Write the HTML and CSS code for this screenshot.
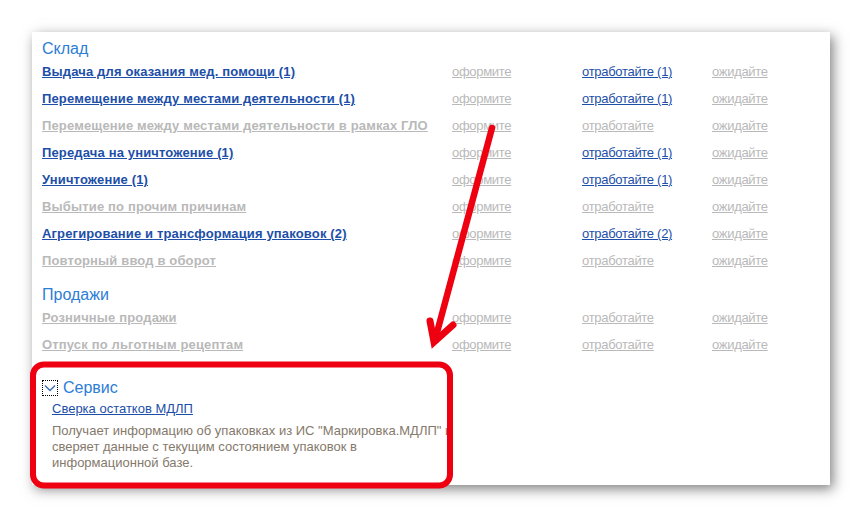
FILE: index.html
```html
<!DOCTYPE html>
<html lang="ru">
<head>
<meta charset="utf-8">
<title>Маркировка</title>
<link rel="stylesheet" href="styles.css">
</head>
<body>
<div class="page">
  <div class="panel">
    <div class="group-title">Склад</div>
    <div class="rows">
      <a class="cell name on">Выдача для оказания мед. помощи (1)</a>
      <a class="cell off">оформите</a>
      <a class="cell on-r">отработайте (1)</a>
      <a class="cell off">ожидайте</a>

      <a class="cell name on">Перемещение между местами деятельности (1)</a>
      <a class="cell off">оформите</a>
      <a class="cell on-r">отработайте (1)</a>
      <a class="cell off">ожидайте</a>

      <a class="cell name off">Перемещение между местами деятельности в рамках ГЛО</a>
      <a class="cell off">оформите</a>
      <a class="cell off">отработайте</a>
      <a class="cell off">ожидайте</a>

      <a class="cell name on">Передача на уничтожение (1)</a>
      <a class="cell off">оформите</a>
      <a class="cell on-r">отработайте (1)</a>
      <a class="cell off">ожидайте</a>

      <a class="cell name on">Уничтожение (1)</a>
      <a class="cell off">оформите</a>
      <a class="cell on-r">отработайте (1)</a>
      <a class="cell off">ожидайте</a>

      <a class="cell name off">Выбытие по прочим причинам</a>
      <a class="cell off">оформите</a>
      <a class="cell off">отработайте</a>
      <a class="cell off">ожидайте</a>

      <a class="cell name on">Агрегирование и трансформация упаковок (2)</a>
      <a class="cell off">оформите</a>
      <a class="cell on-r">отработайте (2)</a>
      <a class="cell off">ожидайте</a>

      <a class="cell name off">Повторный ввод в оборот</a>
      <a class="cell off">оформите</a>
      <a class="cell off">отработайте</a>
      <a class="cell off">ожидайте</a>
    </div>

    <div class="group-title sales">Продажи</div>
    <div class="rows">
      <a class="cell name off">Розничные продажи</a>
      <a class="cell off">оформите</a>
      <a class="cell off">отработайте</a>
      <a class="cell off">ожидайте</a>

      <a class="cell name off">Отпуск по льготным рецептам</a>
      <a class="cell off">оформите</a>
      <a class="cell off">отработайте</a>
      <a class="cell off">ожидайте</a>
    </div>

    <div class="service">
      <div class="service-head">
        <span class="toggle">
          <svg width="14" height="14" viewBox="0 0 14 14"><path d="M2 4.5 L7 9.5 L12 4.5" fill="none" stroke="#3a6fb5" stroke-width="1.4"/></svg>
        </span>
        <span class="group-title inline">Сервис</span>
      </div>
      <div class="service-body">
        <a class="service-link">Сверка остатков МДЛП</a>
        <p class="service-desc">Получает информацию об упаковках из ИС "Маркировка.МДЛП" и сверяет данные с текущим состоянием упаковок в информационной базе.</p>
      </div>
    </div>
  </div>

  <svg class="overlay" width="862" height="517" viewBox="0 0 862 517">
    <rect x="33" y="364.5" width="417" height="121" rx="11" ry="11" fill="none" stroke="#ee0010" stroke-width="6"/>
    <line x1="492" y1="128" x2="435" y2="340" stroke="#ee0010" stroke-width="6.5" stroke-linecap="round"/>
    <polyline points="430,321 434,342 453,325" fill="none" stroke="#ee0010" stroke-width="7" stroke-linecap="round" stroke-linejoin="miter"/>
  </svg>
</div>
</body>
</html>
```
FILE: styles.css
```css
html, body {
  margin: 0;
  padding: 0;
  background: #ffffff;
}

.page {
  position: relative;
  width: 862px;
  height: 517px;
  padding: 32px 0 0 32px;
  box-sizing: border-box;
  font-family: "Liberation Sans", Arial, sans-serif;
}

.panel {
  width: 798px;
  height: 453px;
  box-sizing: border-box;
  background: #ffffff;
  padding: 8px 0 0 10px;
  box-shadow: 3px 4px 12px rgba(0, 0, 0, 0.5);
  display: flex;
  flex-direction: column;
}

.group-title {
  font-size: 16px;
  line-height: 18px;
  color: #2c7dd6;
}

.group-title.sales {
  margin-top: 12px;
}

.group-title.inline {
  display: block;
}

.rows {
  display: grid;
  grid-template-columns: 410px 130px 130px auto;
  grid-auto-rows: 27px;
  align-items: center;
  font-size: 13px;
  line-height: 27px;
}

.cell {
  justify-self: start;
  text-decoration: underline;
  white-space: nowrap;
  cursor: pointer;
  letter-spacing: -0.3px;
}

.cell.name {
  font-weight: bold;
  letter-spacing: 0.15px;
}

.on, .on-r {
  color: #1d4fa8;
}

.off {
  color: #b9b9b9;
}

.service {
  margin-top: 21px;
}

.service-head {
  display: flex;
  align-items: center;
  gap: 5px;
  height: 18px;
}

.toggle {
  width: 16px;
  height: 16px;
  box-sizing: border-box;
  border: 1px dotted #000000;
  display: flex;
  align-items: center;
  justify-content: center;
}

.service-body {
  padding-left: 10px;
  margin-top: 2px;
}

.service-link {
  display: inline-block;
  font-size: 13px;
  line-height: 20px;
  color: #1d4fa8;
  text-decoration: underline;
}

.service-desc {
  margin: 4px 0 0 0;
  width: 402px;
  font-size: 13px;
  line-height: 16px;
  color: #85796b;
}

.overlay {
  position: absolute;
  left: 0;
  top: 0;
  pointer-events: none;
}
```
